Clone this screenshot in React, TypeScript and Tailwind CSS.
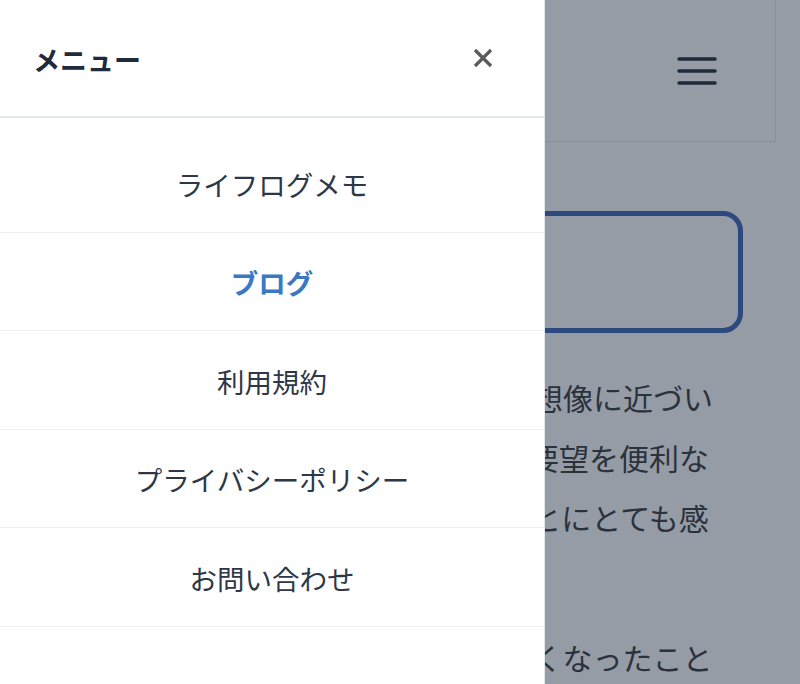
const menuItems = [
  { label: "ライフログメモ", active: false },
  { label: "ブログ", active: true },
  { label: "利用規約", active: false },
  { label: "プライバシーポリシー", active: false },
  { label: "お問い合わせ", active: false },
];

function Page() {
  return (
    <div className="flex flex-col text-[#2a2a2a]">
      <header className="h-[142px] mx-6 border-x border-b border-[#e5e7eb] flex items-center justify-end pr-[58px]">
        <svg width="40" height="28" viewBox="0 0 40 28" fill="none">
          <path d="M2 2h36M2 14h36M2 26h36" stroke="#111827" strokeWidth="3.5" strokeLinecap="round" />
        </svg>
      </header>

      <div className="mt-[69px] mx-[57px] h-[122px] rounded-[20px] border-[5px] border-[#2f5bb1]" />

      <div className="mt-[34px] ml-[83px] text-[30px] leading-[60px] whitespace-nowrap">
        <p>
          <span className="block">このアプリを使い始めてから、理想像に近づい</span>
          <span className="block">ていると実感しています。皆様の要望を便利な</span>
          <span className="block">機能として形にしていただいたことにとても感</span>
          <span className="block">謝しています。</span>
        </p>
        <p className="mt-5">
          <span className="block">毎日の記録が以前よりも続けやすくなったこと</span>
          <span className="block">も嬉しいです。</span>
        </p>
      </div>
    </div>
  );
}

function Drawer() {
  return (
    <aside className="absolute left-0 top-0 h-full w-[545px] bg-white border-r border-[#e5e7eb] flex flex-col">
      <div className="h-[118px] shrink-0 flex items-center justify-between pl-[33px] pr-[50px] border-b-2 border-[#e2e8f0]">
        <h2 className="text-[27px] font-bold text-[#1f2a3a] mt-[4px]">メニュー</h2>
        <button className="w-[22px] h-[22px] flex items-center justify-center">
          <svg width="20" height="20" viewBox="0 0 20 20" fill="none">
            <path d="M2 2l16 16M18 2L2 18" stroke="#5a5a5a" strokeWidth="3.2" />
          </svg>
        </button>
      </div>
      <nav className="pt-[16px]">
        {menuItems.map((item) => (
          <a
            key={item.label}
            className={
              item.active
                ? "h-[98.5px] pt-[3px] flex items-center justify-center border-b border-[#edf0f3] text-[27.5px] font-bold text-[#3b78c4]"
                : "h-[98.5px] pt-[3px] flex items-center justify-center border-b border-[#edf0f3] text-[27.5px] text-[#2d3748]"
            }
          >
            {item.label}
          </a>
        ))}
      </nav>
    </aside>
  );
}

export default function App() {
  return (
    <div className="relative w-[800px] h-[684px] overflow-hidden bg-white font-['Noto_Sans_CJK_JP','Noto_Sans',sans-serif]">
      <Page />
      <div className="absolute inset-0 bg-[#2b394d]/50" />
      <Drawer />
    </div>
  );
}
